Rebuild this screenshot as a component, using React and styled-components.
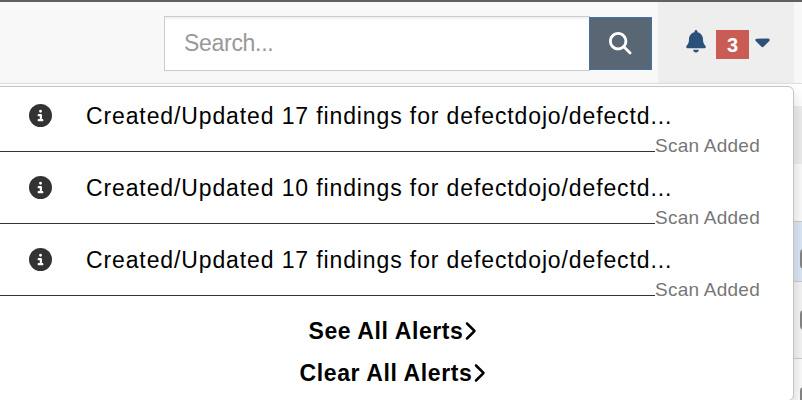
import React from "react";
import styled, { createGlobalStyle } from "styled-components";
import {
  FaBell,
  FaCaretDown,
  FaChevronRight,
  FaCircleInfo,
  FaMagnifyingGlass,
} from "react-icons/fa6";

const GlobalStyle = createGlobalStyle`
  *, *::before, *::after { box-sizing: border-box; }
  body {
    margin: 0;
    overflow: hidden;
    background: #fff;
    font-family: "Liberation Sans", Arial, sans-serif;
  }
`;

const Page = styled.div`
  position: relative;
  width: 802px;
  height: 400px;
  overflow: hidden;
`;

const Navbar = styled.header`
  display: flex;
  height: 84px;
  background: #f8f8f8;
  border-top: 2px solid #625e65;
  border-bottom: 1px solid #e0e0e0;
`;

const SearchForm = styled.div`
  display: flex;
  align-items: center;
  width: 488px;
  height: 55px;
  margin: 14px 6px 0 164px;
`;

const SearchInput = styled.input`
  width: 426px;
  height: 55px;
  padding: 0 19px;
  border: 1px solid #ccc;
  border-right: 0;
  border-radius: 0;
  outline: 0;
  background: #fff;
  box-shadow: inset 0 2px 2px rgba(0, 0, 0, 0.06);
  font: 23px "Liberation Sans", Arial, sans-serif;
  letter-spacing: -0.3px;

  &::placeholder {
    color: #999;
    opacity: 1;
  }
`;

const SearchButton = styled.button`
  display: flex;
  align-items: center;
  justify-content: center;
  width: 63px;
  height: 53px;
  margin-left: -1px;
  padding: 0;
  border: 1px solid #4571a8;
  background: #596673;
  color: #fff;
  font-size: 22.5px;
`;

const AlertToggle = styled.div`
  display: flex;
  align-items: center;
  width: 136px;
  padding: 4px 0 0 28px;
  background: #eee;
  color: #2b5079;
`;

const BellIcon = styled(FaBell)`
  width: 20px;
  height: 22.5px;
  margin-bottom: 6px;
`;

const AlertCount = styled.span`
  width: 33px;
  height: 29px;
  margin: 0 5px 0 10px;
  background: #c95c54;
  color: #fff;
  font-size: 20px;
  font-weight: 700;
  line-height: 31px;
  text-align: center;
`;

const Caret = styled(FaCaretDown)`
  width: 17px;
  height: 23px;
  margin-bottom: 7px;
`;

const Table = styled.main`
  display: flex;
  flex-direction: column;
`;

const TableRow = styled.div`
  display: flex;
  justify-content: flex-end;
  flex: none;
  height: ${({ $height }) => $height}px;
  padding-top: ${({ $inset = 0 }) => $inset}px;
  background: ${({ $tone }) => $tone};
  border-top: ${({ $line }) => ($line ? "1px solid #ccc" : "0")};
`;

const Checkbox = styled.span`
  flex: none;
  width: 20px;
  height: 20px;
  margin-right: -18px;
  border: 2px solid #858585;
  border-radius: 4px;
  background: #fff;
`;

const AlertMenu = styled.section`
  position: absolute;
  top: 86px;
  left: -20px;
  width: 814px;
  height: 315px;
  padding: 0 0 0 19px;
  border: 1px solid #c4c4c4;
  border-radius: 6px;
  background: #fff;
  box-shadow: 0 8px 16px rgba(0, 0, 0, 0.17);
`;

const AlertList = styled.div`
  height: 223px;
`;

const AlertItem = styled.article`
  display: flex;
  flex-direction: column;
  height: 72px;
`;

const AlertTitle = styled.div`
  display: flex;
  align-items: center;
  height: 44px;
  padding: 15px 0 0 29px;
  color: #000;
  font-size: 23px;
  line-height: 29px;
  letter-spacing: 0.88px;
  white-space: nowrap;
`;

const InfoIcon = styled(FaCircleInfo)`
  flex: none;
  width: 23px;
  height: 23px;
  margin: 0 34px 2px 0;
  color: #333;
`;

const AlertMeta = styled.div`
  display: flex;
  height: 28px;
  color: #777;
  font-size: 19px;
  line-height: 29px;
  letter-spacing: 0.25px;
  white-space: nowrap;
`;

const Divider = styled.span`
  flex: none;
  width: 655px;
  height: 1px;
  margin-top: 20px;
  background: #333;
`;

const AlertAction = styled.div`
  display: flex;
  align-items: center;
  justify-content: center;
  height: 42px;
  padding-right: 8px;
  color: #000;
  font-size: 23px;
  font-weight: 700;
  letter-spacing: 0.6px;
`;

const ActionArrow = styled(FaChevronRight)`
  width: 13px;
  height: 20px;
  margin-bottom: 1px;
`;

const alerts = [17, 10, 17];
const actions = ["See All Alerts", "Clear All Alerts"];

export default function App() {
  return (
    <Page>
      <GlobalStyle />
      <Navbar>
        <SearchForm>
          <SearchInput placeholder="Search..." />
          <SearchButton aria-label="Search">
            <FaMagnifyingGlass />
          </SearchButton>
        </SearchForm>
        <AlertToggle>
          <BellIcon />
          <AlertCount>3</AlertCount>
          <Caret />
        </AlertToggle>
      </Navbar>
      <Table>
        <TableRow $height={22} $tone="#fff" />
        <TableRow $height={58} $tone="#eee" />
        <TableRow $height={57} $tone="#fcfcfc" />
        <TableRow $height={60} $tone="#dce8f6" $inset={27} $line>
          <Checkbox />
        </TableRow>
        <TableRow $height={77} $tone="#f5f5f5" $inset={28} $line>
          <Checkbox />
        </TableRow>
        <TableRow $height={60} $tone="#fcfcfc" $inset={28} $line>
          <Checkbox />
        </TableRow>
      </Table>
      <AlertMenu>
        <AlertList>
          {alerts.map((count, index) => (
            <AlertItem key={index}>
              <AlertTitle>
                <InfoIcon />
                Created/Updated {count} findings for defectdojo/defectd...
              </AlertTitle>
              <AlertMeta>
                <Divider />
                Scan Added
              </AlertMeta>
            </AlertItem>
          ))}
        </AlertList>
        {actions.map((label) => (
          <AlertAction key={label}>
            {label}
            <ActionArrow />
          </AlertAction>
        ))}
      </AlertMenu>
    </Page>
  );
}
